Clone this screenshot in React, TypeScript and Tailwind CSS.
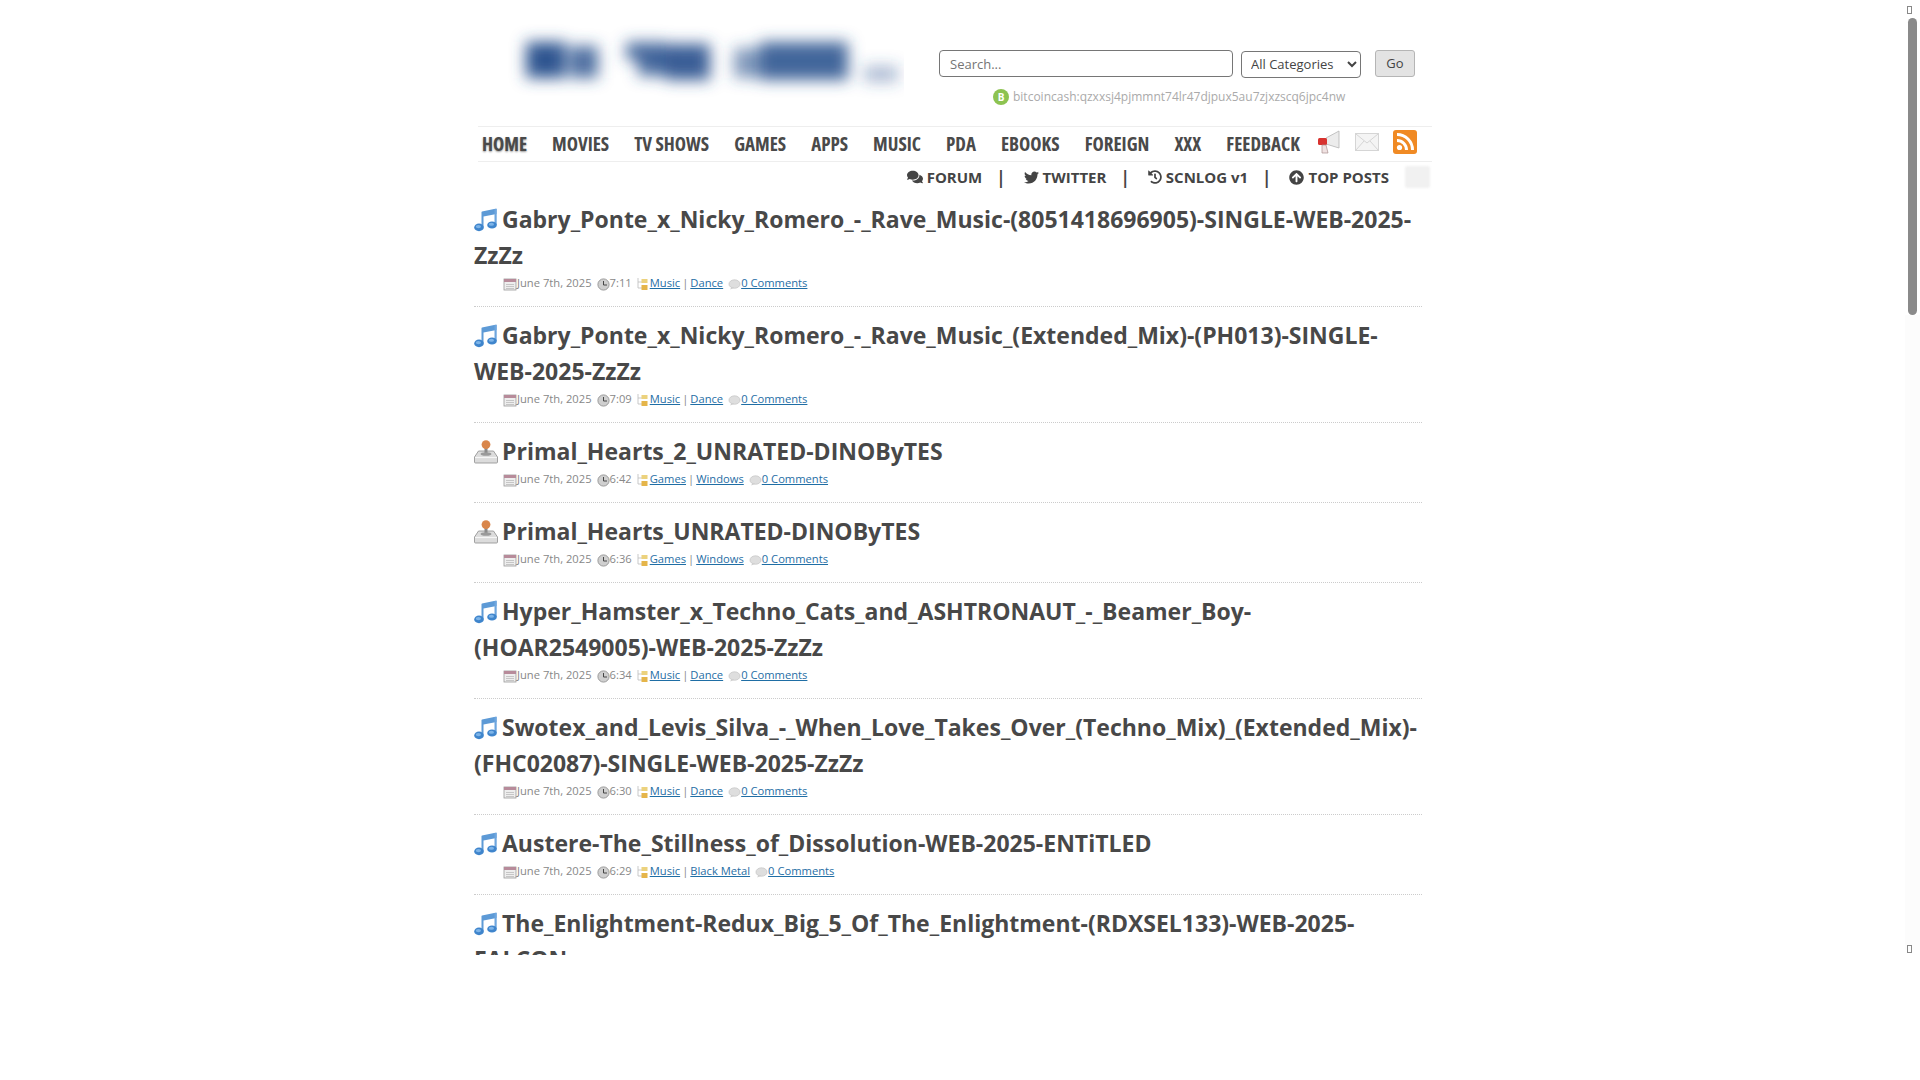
import { FaComments, FaTwitter, FaHistory, FaArrowCircleUp } from 'react-icons/fa';

type Post = { title: string; kind: 'music' | 'games'; time: string; cat: string; sub: string };

const posts: Post[] = [
    { title: 'Gabry_Ponte_x_Nicky_Romero_-_Rave_Music-(8051418696905)-SINGLE-WEB-2025-ZzZz', kind: 'music', time: '7:11', cat: 'Music', sub: 'Dance' },
    { title: 'Gabry_Ponte_x_Nicky_Romero_-_Rave_Music_(Extended_Mix)-(PH013)-SINGLE-WEB-2025-ZzZz', kind: 'music', time: '7:09', cat: 'Music', sub: 'Dance' },
    { title: 'Primal_Hearts_2_UNRATED-DINOByTES', kind: 'games', time: '6:42', cat: 'Games', sub: 'Windows' },
    { title: 'Primal_Hearts_UNRATED-DINOByTES', kind: 'games', time: '6:36', cat: 'Games', sub: 'Windows' },
    { title: 'Hyper_Hamster_x_Techno_Cats_and_ASHTRONAUT_-_Beamer_Boy-(HOAR2549005)-WEB-2025-ZzZz', kind: 'music', time: '6:34', cat: 'Music', sub: 'Dance' },
    { title: 'Swotex_and_Levis_Silva_-_When_Love_Takes_Over_(Techno_Mix)_(Extended_Mix)-(FHC02087)-SINGLE-WEB-2025-ZzZz', kind: 'music', time: '6:30', cat: 'Music', sub: 'Dance' },
    { title: 'Austere-The_Stillness_of_Dissolution-WEB-2025-ENTiTLED', kind: 'music', time: '6:29', cat: 'Music', sub: 'Black Metal' },
    { title: 'The_Enlightment-Redux_Big_5_Of_The_Enlightment-(RDXSEL133)-WEB-2025-FALCON', kind: 'music', time: '6:27', cat: 'Music', sub: 'Dance' },
];

const navItems = ['MOVIES', 'TV SHOWS', 'GAMES', 'APPS', 'MUSIC', 'PDA', 'EBOOKS', 'FOREIGN', 'XXX', 'FEEDBACK'];

function Logo() {
    return (
        <svg width="400" height="80" viewBox="0 0 400 80" className="shrink-0">
            <defs>
                <filter id="logo-blur" x="-20%" y="-60%" width="140%" height="220%">
                    <feGaussianBlur stdDeviation="7.5" />
                </filter>
            </defs>
            <g filter="url(#logo-blur)" fill="#2f5590">
                <rect x="22" y="20" width="40" height="36" />
                <rect x="66" y="24" width="28" height="32" opacity="0.85" />
                <rect x="122" y="20" width="40" height="18" opacity="0.85" />
                <rect x="134" y="32" width="32" height="22" opacity="0.85" />
                <rect x="162" y="22" width="44" height="36" opacity="0.95" />
                <rect x="230" y="26" width="26" height="30" opacity="0.6" />
                <rect x="256" y="20" width="88" height="38" opacity="0.9" />
                <rect x="360" y="44" width="34" height="16" opacity="0.4" />
            </g>
        </svg>
    );
}

function MusicIcon() {
    return (
        <svg width="24" height="24" viewBox="0 0 24 24" className="inline-block align-[-4px] mr-[4px]">
            <path d="M8 3.5 L22.5 0.5 V6 L9.5 8.5 V19 H7.5 V4 Z" fill="#5d9ad6" />
            <rect x="20.5" y="1" width="2.2" height="16" fill="#6ea6de" />
            <ellipse cx="5" cy="19.4" rx="4.8" ry="3.8" fill="#3f85cc" />
            <ellipse cx="4.4" cy="18.6" rx="2.6" ry="1.6" fill="#7db4e8" />
            <ellipse cx="18" cy="17" rx="4.8" ry="3.6" fill="#3f85cc" />
            <ellipse cx="17.4" cy="16.2" rx="2.6" ry="1.5" fill="#7db4e8" />
        </svg>
    );
}

function GamesIcon() {
    return (
        <svg width="24" height="24" viewBox="0 0 24 24" className="inline-block align-[-4px] mr-[4px]">
            <path d="M0.5 17 L4.5 11 H19.5 L23.5 17 V22 Q23.5 23 22.5 23 H1.5 Q0.5 23 0.5 22 Z" fill="#dcdcdc" stroke="#8d8d8d" strokeWidth="0.8" />
            <path d="M1 17.5 H23" stroke="#f6f6f6" strokeWidth="1.2" />
            <rect x="10.5" y="6" width="3" height="8" fill="#8a8a8a" />
            <circle cx="12" cy="4.6" r="4.4" fill="#d9864b" />
            <ellipse cx="12" cy="14" rx="5.4" ry="1.8" fill="#9a9a9a" />
        </svg>
    );
}

function MetaIcon({ type }: { type: 'date' | 'clock' | 'folder' | 'comment' }) {
    if (type === 'date') {
        return (
            <svg width="14" height="14" viewBox="0 0 14 14" className="shrink-0 mt-[4px]">
                <rect x="1" y="2" width="12" height="11" fill="#eeeeee" stroke="#999999" strokeWidth="0.8" />
                <rect x="1" y="2" width="12" height="3" fill="#b78b9a" />
                <path d="M3 7.5H11M3 9.5H11M3 11.5H11" stroke="#bbbbbb" strokeWidth="0.8" />
            </svg>
        );
    }
    if (type === 'clock') {
        return (
            <svg width="13" height="13" viewBox="0 0 13 13" className="shrink-0 mt-[5px]">
                <circle cx="6.5" cy="6.5" r="5.6" fill="#cfcfcf" stroke="#9a9a9a" />
                <path d="M6.5 3V7H10" stroke="#444444" strokeWidth="1" fill="none" />
            </svg>
        );
    }
    if (type === 'folder') {
        return (
            <svg width="14" height="14" viewBox="0 0 14 14" className="shrink-0 mt-[4px]">
                <path d="M2 1V11H6M2 5H6" stroke="#bbbbbb" strokeWidth="0.8" fill="none" />
                <rect x="5.5" y="2" width="6" height="4" fill="#ecd27d" />
                <rect x="5.5" y="8" width="6" height="5" fill="#e5b54a" />
            </svg>
        );
    }
    return (
        <svg width="13" height="13" viewBox="0 0 14 13" className="shrink-0 mt-[5px]">
            <ellipse cx="7" cy="6" rx="6" ry="4.6" fill="#dedede" stroke="#bbbbbb" strokeWidth="0.6" />
            <path d="M3.5 9 L2.5 12 L7 10Z" fill="#cfcfcf" />
        </svg>
    );
}

function PostRow({ post }: { post: Post }) {
    return (
        <article className="pt-[10px] pb-[13px] border-b border-dotted border-[#cccccc]">
            <h2 className="text-[23px] leading-[36px] font-bold text-[#484848] [overflow-wrap:anywhere]">
                {post.kind === 'music' ? <MusicIcon /> : <GamesIcon />}
                {post.title}
            </h2>
            <div className="flex h-[20px] pl-[29px] text-[11.2px] leading-[20px] text-[#888888]">
                <MetaIcon type="date" />
                <span>June 7th, 2025</span>
                <span className="ml-[5px] flex">
                    <MetaIcon type="clock" />
                    <span>{post.time}</span>
                </span>
                <span className="ml-[4px] flex">
                    <MetaIcon type="folder" />
                    <a className="text-[#1f6ea5] underline">{post.cat}</a>
                    <span className="mx-[2px]">|</span>
                    <a className="text-[#1f6ea5] underline">{post.sub}</a>
                </span>
                <span className="ml-[5px] flex">
                    <MetaIcon type="comment" />
                    <a className="text-[#1f6ea5] underline">0 Comments</a>
                </span>
            </div>
        </article>
    );
}

function SubLink({ icon, label }: { icon: React.ReactNode; label: string }) {
    return (
        <span className="flex items-center gap-[4px]">
            {icon}
            <span>{label}</span>
        </span>
    );
}

export default function App() {
    return (
        <div className="relative min-h-screen bg-white font-['Open_Sans',sans-serif]">
            <div className="h-[955px] overflow-hidden">
                <div className="w-[972px] mx-auto">
                    <header className="flex h-[126px]">
                        <div className="pl-[30px] pt-[22px]">
                            <Logo />
                        </div>
                        <div className="pt-[50px] ml-[35px]">
                            <div className="flex items-start">
                                <input
                                    placeholder="Search..."
                                    className="w-[294px] h-[27px] px-[10px] border border-[#767676] rounded-[4px] text-[13px] text-[#555555] bg-white placeholder:text-[#757575]"
                                />
                                <select className="ml-[8px] w-[120px] h-[27px] mt-[0.5px] pl-[5px] border border-[#767676] rounded-[4px] text-[13px] leading-[16px] text-[#444444] bg-white">
                                    <option>All Categories</option>
                                </select>
                                <button className="ml-[14px] w-[40px] h-[27px] border border-[#b5b5b5] rounded-[3px] bg-[#e3e3e3] text-[13px] text-[#444444]">
                                    Go
                                </button>
                            </div>
                            <div className="flex items-center mt-[11px] ml-[54px] text-[12px] leading-[16px] text-[#aaaaaa]">
                                <svg width="16" height="16" viewBox="0 0 16 16" className="mr-[4px]">
                                    <circle cx="8" cy="8" r="8" fill="#8dc351" />
                                    <text x="8" y="11.5" fontSize="10" fontWeight="700" fill="#ffffff" textAnchor="middle">
                                        B
                                    </text>
                                </svg>
                                bitcoincash:qzxxsj4pjmmnt74lr47djpux5au7zjxzscq6jpc4nw
                            </div>
                        </div>
                    </header>

                    <nav className="ml-[4px] w-[954px] h-[36px] flex items-center border-y border-[#eeeeee] pl-[4px] pt-[1px] text-[19px] font-bold text-[#4a4a4a] [font-stretch:84%]">
                        <span className="mr-[25px] [text-shadow:0_1px_2px_#999]">HOME</span>
                        <div className="flex gap-[25px]">
                            {navItems.map((item) => (
                                <span key={item}>{item}</span>
                            ))}
                        </div>
                        <div className="flex items-center ml-[17px] gap-[14px] mt-[-5px]">
                            <svg width="24" height="24" viewBox="0 0 24 24">
                                <path d="M9 8 L22 1 V18 L9 14 Z" fill="#ececec" stroke="#b5b5b5" strokeWidth="0.8" />
                                <rect x="1" y="8" width="9" height="7" rx="1.5" fill="#d8322f" />
                                <path d="M5 15 L5 23 H11 L9 15 Z" fill="#f0e2e2" stroke="#a98f8f" strokeWidth="0.7" />
                            </svg>
                            <svg width="24" height="18" viewBox="0 0 24 18">
                                <rect x="0.5" y="0.5" width="23" height="17" fill="#f4f4f4" stroke="#d5d5d5" />
                                <path d="M1 1 L12 10 L23 1 M1 17 L9 8 M23 17 L15 8" fill="none" stroke="#d5d5d5" />
                            </svg>
                            <svg width="24" height="24" viewBox="0 0 24 24">
                                <rect width="24" height="24" rx="3" fill="#f08a24" />
                                <circle cx="6.5" cy="17.5" r="2.6" fill="#ffffff" />
                                <path d="M4 10.5 A9.5 9.5 0 0 1 13.5 20" fill="none" stroke="#ffffff" strokeWidth="3" />
                                <path d="M4 4.5 A15.5 15.5 0 0 1 19.5 20" fill="none" stroke="#ffffff" strokeWidth="3" />
                            </svg>
                        </div>
                    </nav>

                    <div className="ml-[4px] w-[954px] h-[30px] flex items-center justify-end text-[15px] font-bold text-[#444444]">
                        <SubLink icon={<FaComments size={16} />} label="FORUM" />
                        <span className="ml-[14px] mr-[18px] text-[17px] leading-[17px] font-bold">|</span>
                        <SubLink icon={<FaTwitter size={15} />} label="TWITTER" />
                        <span className="ml-[14px] mr-[18px] text-[17px] leading-[17px] font-bold">|</span>
                        <SubLink icon={<FaHistory size={14} />} label="SCNLOG v1" />
                        <span className="ml-[14px] mr-[18px] text-[17px] leading-[17px] font-bold">|</span>
                        <SubLink icon={<FaArrowCircleUp size={15} />} label="TOP POSTS" />
                        <div className="ml-[16px] mr-[2px] w-[25px] h-[22px] bg-[#f1f1f1] rounded-[2px] blur-[1px]" />
                    </div>

                    <main className="w-[948px] mt-[-1px]">
                        {posts.map((post) => (
                            <PostRow key={post.title} post={post} />
                        ))}
                    </main>
                </div>
            </div>

            <div className="absolute top-[315px] right-0 w-[15px] h-[635px] bg-[#fcfcfc]" />
            <div className="absolute top-[6px] right-[8px] w-[5px] h-[8px] border border-[#888888]" />
            <div className="absolute top-[18px] right-[3px] w-[9px] h-[297px] rounded-full bg-[#8a8a8a]" />
            <div className="absolute top-[945px] right-[8px] w-[5px] h-[8px] border border-[#888888]" />
        </div>
    );
}
